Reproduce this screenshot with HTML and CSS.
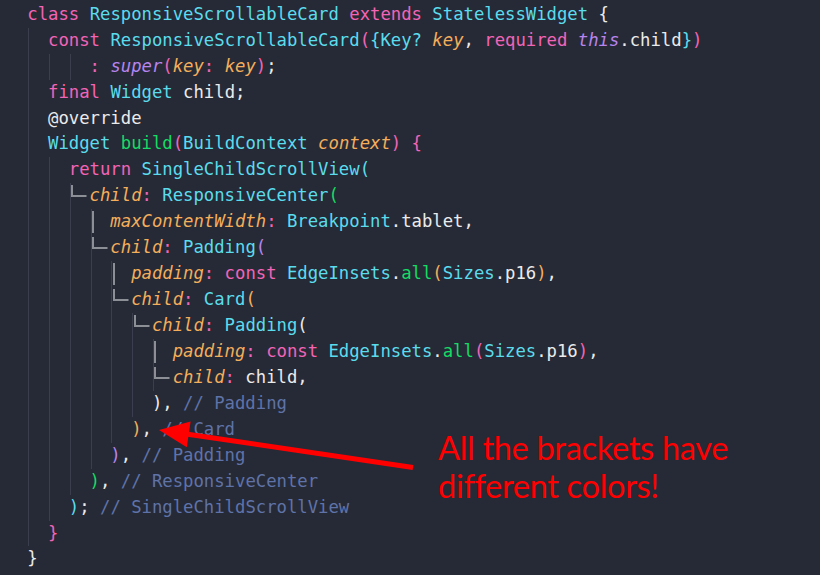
FILE: index.html
```html
<!DOCTYPE html>
<html>
<head>
<meta charset="utf-8">
<link rel="stylesheet" href="styles.css">
</head>
<body>
<div class="editor">
  <div class="code">
    <div class="ln"><span class="k">class</span> <span class="t">ResponsiveScrollableCard</span> <span class="k">extends</span> <span class="t">StatelessWidget</span> <span class="b0">{</span></div>
    <div class="ln"><span class="g"></span><span class="k">const</span> <span class="t">ResponsiveScrollableCard</span><span class="b1">(</span><span class="b2">{</span><span class="t">Key?</span> <span class="p">key</span>, <span class="k">required</span> <span class="th">this</span>.child<span class="b2">}</span><span class="b1">)</span></div>
    <div class="ln"><span class="g"></span><span class="g"></span><span class="g"></span><span class="k">:</span> <span class="th">super</span><span class="b1">(</span><span class="p">key</span><span class="k">:</span> <span class="p">key</span><span class="b1">)</span>;</div>
    <div class="ln"><span class="g"></span><span class="k">final</span> <span class="t">Widget</span> child;</div>
    <div class="ln"><span class="g"></span>@override</div>
    <div class="ln"><span class="g"></span><span class="t">Widget</span> <span class="f">build</span><span class="b1">(</span><span class="t">BuildContext</span> <span class="p">context</span><span class="b1">)</span> <span class="b1">{</span></div>
    <div class="ln"><span class="g"></span><span class="g"></span><span class="k">return</span> <span class="t">SingleChildScrollView</span><span class="b2">(</span></div>
    <div class="ln"><span class="g"></span><span class="g"></span><span class="fl"></span><span class="p">child</span><span class="k">:</span> <span class="t">ResponsiveCenter</span><span class="b3">(</span></div>
    <div class="ln"><span class="g"></span><span class="g"></span><span class="g"></span><span class="fv"></span><span class="p">maxContentWidth</span><span class="k">:</span> <span class="t">Breakpoint</span>.tablet,</div>
    <div class="ln"><span class="g"></span><span class="g"></span><span class="g"></span><span class="fl"></span><span class="p">child</span><span class="k">:</span> <span class="t">Padding</span><span class="b4">(</span></div>
    <div class="ln"><span class="g"></span><span class="g"></span><span class="g"></span><span class="g"></span><span class="fv"></span><span class="p">padding</span><span class="k">:</span> <span class="k">const</span> <span class="t">EdgeInsets</span>.<span class="f">all</span><span class="b5">(</span><span class="t">Sizes</span>.p16<span class="b5">)</span>,</div>
    <div class="ln"><span class="g"></span><span class="g"></span><span class="g"></span><span class="g"></span><span class="fl"></span><span class="p">child</span><span class="k">:</span> <span class="t">Card</span><span class="b5">(</span></div>
    <div class="ln"><span class="g"></span><span class="g"></span><span class="g"></span><span class="g"></span><span class="g"></span><span class="fl"></span><span class="p">child</span><span class="k">:</span> <span class="t">Padding</span><span class="b0">(</span></div>
    <div class="ln"><span class="g"></span><span class="g"></span><span class="g"></span><span class="g"></span><span class="g"></span><span class="g"></span><span class="fv"></span><span class="p">padding</span><span class="k">:</span> <span class="k">const</span> <span class="t">EdgeInsets</span>.<span class="f">all</span><span class="b1">(</span><span class="t">Sizes</span>.p16<span class="b1">)</span>,</div>
    <div class="ln"><span class="g"></span><span class="g"></span><span class="g"></span><span class="g"></span><span class="g"></span><span class="g"></span><span class="fl"></span><span class="p">child</span><span class="k">:</span> child,</div>
    <div class="ln"><span class="g"></span><span class="g"></span><span class="g"></span><span class="g"></span><span class="g"></span><span class="g"></span><span class="b0">)</span>, <span class="c">// Padding</span></div>
    <div class="ln"><span class="g"></span><span class="g"></span><span class="g"></span><span class="g"></span><span class="g"></span><span class="b5">)</span>, <span class="c">// Card</span></div>
    <div class="ln"><span class="g"></span><span class="g"></span><span class="g"></span><span class="g"></span><span class="b4">)</span>, <span class="c">// Padding</span></div>
    <div class="ln"><span class="g"></span><span class="g"></span><span class="g"></span><span class="b3">)</span>, <span class="c">// ResponsiveCenter</span></div>
    <div class="ln"><span class="g"></span><span class="g"></span><span class="b2">)</span>; <span class="c">// SingleChildScrollView</span></div>
    <div class="ln"><span class="g"></span><span class="b1">}</span></div>
    <div class="ln"><span class="b0">}</span></div>
  </div>
  <svg class="arrow" width="820" height="575" viewBox="0 0 820 575">
    <line x1="186" y1="434" x2="413" y2="467.5" stroke="#ff0000" stroke-width="5"/>
    <polygon points="159,430 190.6,421.5 186.8,447.3" fill="#ff0000"/>
  </svg>
  <p class="note">All the brackets have<br>different colors!</p>
</div>
</body>
</html>
```

FILE: styles.css
```css
html, body {
  margin: 0;
  padding: 0;
  background: #262a37;
}

.editor {
  position: relative;
  width: 820px;
  height: 575px;
  overflow: hidden;
  background: #262a37;
}

.code {
  padding: 1.8px 0 0 27.3px;
  font-family: "DejaVu Sans Mono", monospace;
  font-size: 17.26px;
  line-height: 25.95px;
  color: #ebebeb;
}

.ln {
  height: 25.95px;
  white-space: pre;
}

.g, .fv, .fl {
  display: inline-block;
  width: 2ch;
  height: 25.95px;
  vertical-align: top;
}

.g {
  background: linear-gradient(#3b3f4d, #3b3f4d) 1px 0 / 1px 100% no-repeat;
}

.fv {
  background:
    linear-gradient(#8c8f96, #8c8f96) 2.5px 2px / 2px 22px no-repeat,
    linear-gradient(#3b3f4d, #3b3f4d) 1px 0 / 1px 100% no-repeat;
}

.fl {
  background:
    linear-gradient(#8c8f96, #8c8f96) 2.5px 2px / 2px 12px no-repeat,
    linear-gradient(#8c8f96, #8c8f96) 2.5px 12px / 15.5px 2px no-repeat,
    linear-gradient(#3b3f4d, #3b3f4d) 1px 0 / 1px 100% no-repeat;
}

.k { color: #f264b6; }
.t { color: #5bdcec; }
.p { color: #f5ae5a; font-style: italic; }
.th { color: #b884ee; font-style: italic; }
.f { color: #14dc64; }
.c { color: #5f73a8; }

.b0 { color: #ebebeb; }
.b1 { color: #f264b6; }
.b2 { color: #5bdcec; }
.b3 { color: #14dc64; }
.b4 { color: #b884ee; }
.b5 { color: #f5ae5a; }

.arrow {
  position: absolute;
  left: 0;
  top: 0;
  pointer-events: none;
}

.note {
  position: absolute;
  left: 438px;
  top: 429.4px;
  margin: 0;
  font-family: Lato, "Liberation Sans", sans-serif;
  font-size: 32.5px;
  letter-spacing: -0.3px;
  line-height: 38px;
  color: #ff0000;
}
```
